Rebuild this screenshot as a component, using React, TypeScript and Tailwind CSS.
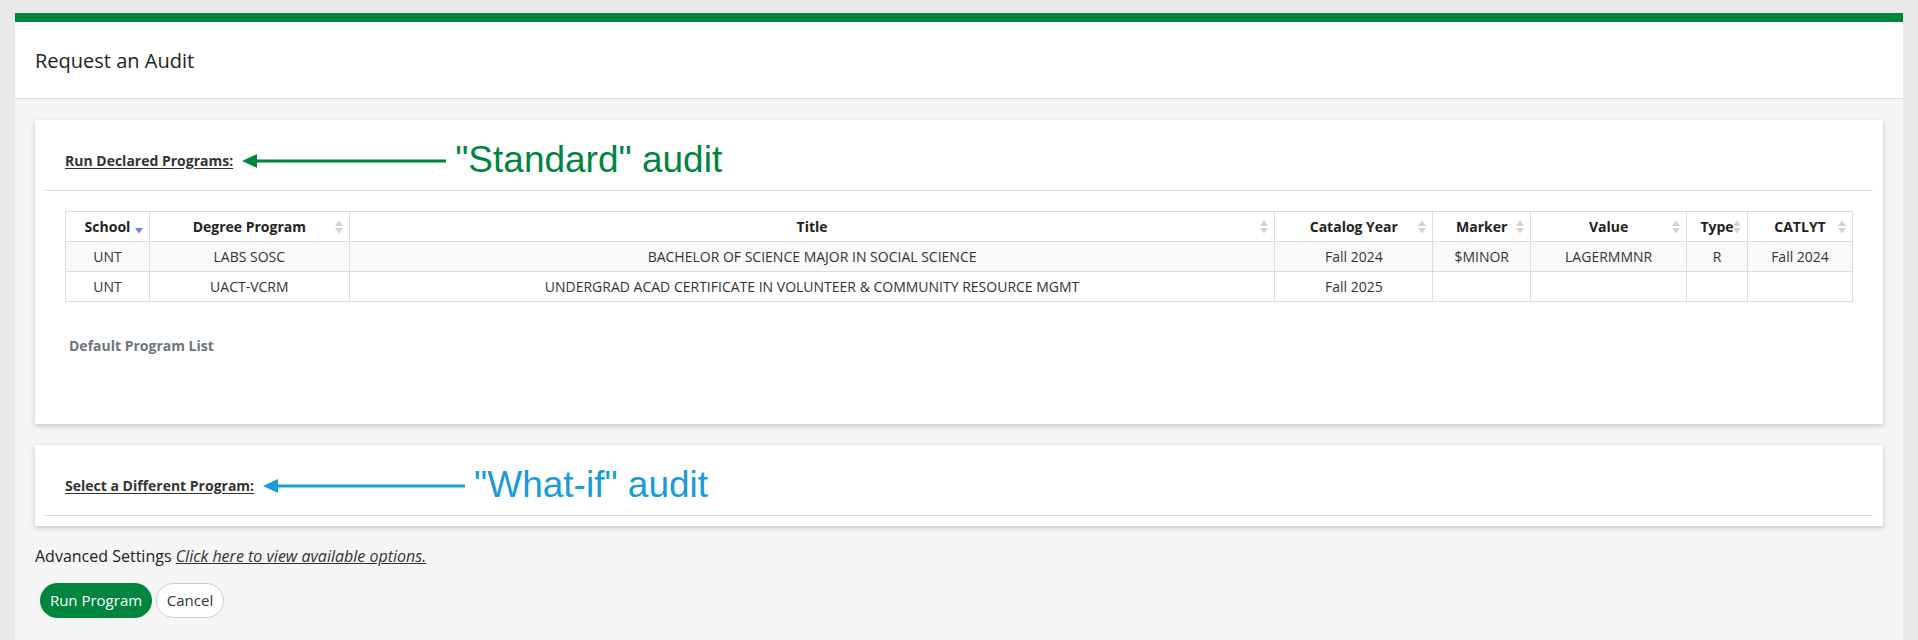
import React from "react";

const SortBoth = () => (
  <svg width="8" height="14" viewBox="0 0 8 14" className="absolute right-[6px] top-1/2 -translate-y-1/2">
    <polygon points="0,6 4,0.5 8,6" fill="#d3d3d3" />
    <polygon points="0,8 8,8 4,13.5" fill="#d3d3d3" />
  </svg>
);

const SortDesc = () => (
  <svg width="8" height="14" viewBox="0 0 8 14" className="absolute right-[6px] top-1/2 -translate-y-1/2">
    <polygon points="0,8 8,8 4,13.5" fill="#7d7fd6" />
  </svg>
);

const cols = [
  { name: "School", w: "w-[84px]", desc: true },
  { name: "Degree Program", w: "w-[200px]" },
  { name: "Title", w: "w-[927px]" },
  { name: "Catalog Year", w: "w-[158px]" },
  { name: "Marker", w: "w-[98px]" },
  { name: "Value", w: "w-[156px]" },
  { name: "Type", w: "w-[61px]" },
  { name: "CATLYT", w: "w-[105px]" },
];

const rows = [
  ["UNT", "LABS SOSC", "BACHELOR OF SCIENCE MAJOR IN SOCIAL SCIENCE", "Fall 2024", "$MINOR", "LAGERMMNR", "R", "Fall 2024"],
  ["UNT", "UACT-VCRM", "UNDERGRAD ACAD CERTIFICATE IN VOLUNTEER & COMMUNITY RESOURCE MGMT", "Fall 2025", "", "", "", ""],
];

const Arrow = ({ color, width }: { color: string; width: number }) => (
  <svg width={width} height="16" viewBox={`0 0 ${width} 16`} className="shrink-0">
    <polygon points={`0,8 15,1 15,15`} fill={color} />
    <rect x="14" y="6.5" width={width - 14} height="3" fill={color} />
  </svg>
);

const CardHeader = ({
  title,
  note,
  color,
  arrowW,
}: {
  title: string;
  note: string;
  color: string;
  arrowW: number;
}) => (
  <div className="h-[61px] flex items-center px-5 border-b border-[#dedede]">
    <span className="text-[14px] font-bold text-[#333] underline underline-offset-2">{title}</span>
    <span className="ml-[9px] mt-[1px] flex">
      <Arrow color={color} width={arrowW} />
    </span>
    <span
      className="ml-[9px] text-[37px] leading-none mb-[2px]"
      style={{ color, fontFamily: '"Liberation Sans", Arial, sans-serif' }}
    >
      {note}
    </span>
  </div>
);

export default function App() {
  return (
    <div className="min-h-[640px] flex flex-col bg-[#e9e9e9] pt-[13px] px-[15px] font-['Open_Sans',sans-serif] text-[#333]">
      <div className="flex-1 border-t-[9px] border-[#00853e] bg-[#f5f5f5]">
        <div className="bg-white h-[77px] flex items-center px-5 border-b border-[#dddddd]">
          <h1 className="text-[20px] text-[#222] pt-[1px]">Request an Audit</h1>
        </div>

        <div className="px-5 pt-[21px] pb-[20px]">
          <div className="bg-white p-[10px] shadow-[0_2px_5px_rgba(0,0,0,0.2)] h-[304px]">
            <CardHeader title="Run Declared Programs:" note={'"Standard" audit'} color="#00853e" arrowW={204} />
            <div className="px-5 pt-5">
              <table className="border-collapse text-[14px] text-[#333]">
                <thead>
                  <tr className="h-[30px]">
                    {cols.map((c) => (
                      <th
                        key={c.name}
                        className={`${c.w} relative border border-[#dddddd] font-bold text-[#222] text-center p-0`}
                      >
                        {c.name}
                        {c.desc ? <SortDesc /> : <SortBoth />}
                      </th>
                    ))}
                  </tr>
                </thead>
                <tbody>
                  {rows.map((r, i) => (
                    <tr key={i} className={`h-[30px] ${i === 0 ? "bg-[#f9f9f9]" : "bg-white"}`}>
                      {r.map((v, j) => (
                        <td key={j} className="border border-[#dddddd] text-center p-0">
                          {v}
                        </td>
                      ))}
                    </tr>
                  ))}
                </tbody>
              </table>
              <div className="mt-[33px] text-[14px] font-bold text-[#6c757d] pl-1">Default Program List</div>
            </div>
          </div>

          <div className="mt-[21px] bg-white p-[10px] shadow-[0_2px_5px_rgba(0,0,0,0.2)]">
            <CardHeader title="Select a Different Program:" note={'"What-if" audit'} color="#1b9bd7" arrowW={202} />
          </div>

          <div className="mt-[18px] text-[16px] leading-[24px] text-[#222]">
            Advanced Settings{" "}
            <a href="#" className="italic underline text-[#333]">
              Click here to view available options.
            </a>
          </div>

          <div className="mt-[15px] flex gap-[4px] pl-[5px]">
            <button className="h-[35px] w-[112px] rounded-full bg-[#00853e] text-white text-[15px]">Run Program</button>
            <button className="h-[35px] w-[68px] rounded-full bg-white border border-[#cccccc] text-[#333] text-[15px]">
              Cancel
            </button>
          </div>
        </div>
      </div>
    </div>
  );
}
